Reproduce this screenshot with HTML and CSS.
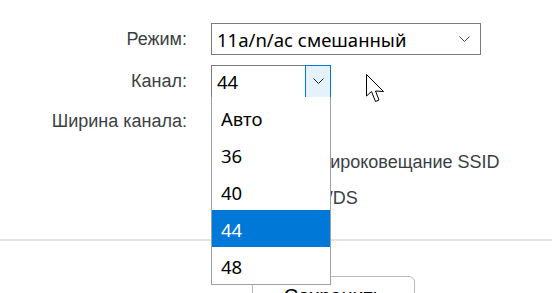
FILE: index.html
```html
<!DOCTYPE html>
<html lang="ru">
<head>
  <meta charset="UTF-8">
  <title>Беспроводная сеть</title>
  <link rel="stylesheet" href="styles.css">
</head>
<body>

<div class="wifi-form">
  <div class="row row-mode">
    <span class="label">Режим:</span>
    <div class="select select-mode">
      <span class="select-text">11a/n/ac смешанный</span>
      <svg class="chevron" width="11" height="7" viewBox="0 0 11 7"><path d="M0.5 0.5 L5.5 5.5 L10.5 0.5" fill="none" stroke="#444" stroke-width="1"/></svg>
    </div>
  </div>

  <div class="row row-channel">
    <span class="label">Канал:</span>
    <div class="select select-channel">
      <span class="select-text">44</span>
      <span class="select-btn">
        <svg width="11" height="7" viewBox="0 0 11 7"><path d="M0.5 0.5 L5.5 5.5 L10.5 0.5" fill="none" stroke="#222" stroke-width="1"/></svg>
      </span>
      <ul class="dropdown">
        <li>Авто</li>
        <li>36</li>
        <li>40</li>
        <li class="active">44</li>
        <li>48</li>
      </ul>
    </div>
  </div>

  <div class="row row-width">
    <span class="label">Ширина канала:</span>
    <div class="select select-small">
      <span class="select-text">Авто</span>
    </div>
  </div>

  <div class="row row-check row-ssid">
    <span class="label"></span>
    <label class="check"><input type="checkbox"> <span>Включить широковещание SSID</span></label>
  </div>

  <div class="row row-check row-wds">
    <span class="label"></span>
    <label class="check"><input type="checkbox"> <span>Включить WDS</span></label>
  </div>
</div>

<div class="actions">
  <button class="save-btn" type="button">Сохранить</button>
</div>

<svg class="cursor" width="20" height="29" viewBox="0 0 20 29">
  <path d="M0.5 0.5 L0.5 22 L5.5 17.5 L9.5 27.5 L13 26 L9.5 17 L17.5 17.5 Z" fill="#fff" stroke="#000" stroke-width="1" stroke-linejoin="miter"/>
</svg>

</body>
</html>
```

FILE: styles.css
```css
body { margin: 0; background: #fff; font-family: "Liberation Sans", Arial, sans-serif; color: #333; }

.wifi-form { padding-top: 23px; }
.row { display: flex; align-items: center; gap: 24px; }
.label {
  width: 187px;
  text-align: right;
  font-size: 18px;
  color: #3b3f44;
}
.row-mode { height: 32px; }
.row-channel { height: 33px; margin-top: 10px; }
.row-width { height: 33px; margin-top: 7px; }
.row-ssid { height: 30px; margin-top: 9px; }
.row-wds { height: 30px; margin-top: 6px; }

.select {
  position: relative;
  display: flex;
  align-items: center;
  height: 100%;
  box-sizing: border-box;
  border: 1px solid #7a7a7a;
  background: #fff;
  font-family: "Noto Sans", "Open Sans", sans-serif;
  font-size: 18.5px;
  color: #000;
}
.select-text { padding-left: 5px; flex: 1; }
.select-mode { width: 270px; }
.select-mode .chevron { margin-right: 10px; }
.select-channel { width: 120px; }
.select-small { width: 120px; }
.select-btn {
  display: flex;
  align-items: center;
  justify-content: center;
  width: 26px;
  height: 33px;
  margin: -1px -1px -1px 0;
  box-sizing: border-box;
  border: 1px solid #0078d7;
  background: #e5f1fb;
}

.dropdown {
  position: absolute;
  top: 100%;
  left: -1px;
  width: 120px;
  box-sizing: border-box;
  margin: 0;
  padding: 2px 0 0;
  list-style: none;
  background: #fff;
  border: 1px solid #a0a0a0;
  border-top: none;
  z-index: 2;
}
.dropdown li {
  height: 37px;
  line-height: 39px;
  padding-left: 9px;
}
.dropdown li.active { background: #0078d7; color: #fff; }

.check {
  display: flex;
  align-items: center;
  font-size: 18px;
  color: #3b3f44;
}
.check input { margin: 0 6px 0 0; width: 13px; height: 13px; }

.actions {
  margin-top: 26px;
  border-top: 2px solid #e2e2e2;
  padding: 35px 0 0 252px;
}
.save-btn {
  width: 163px;
  height: 40px;
  background: #fff;
  border: 1px solid #bbb;
  border-radius: 6px;
  font-family: "Liberation Sans", Arial, sans-serif;
  font-size: 20px;
  color: #000;
}

.cursor { position: absolute; left: 366px; top: 74px; }
```
